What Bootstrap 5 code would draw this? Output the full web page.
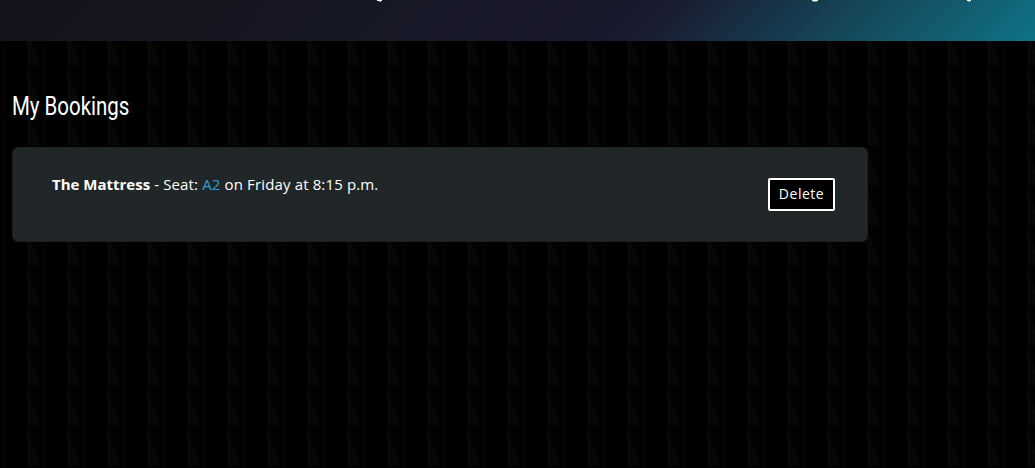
<!DOCTYPE html>
<html lang="en">
<head>
<meta charset="utf-8">
<meta name="viewport" content="width=device-width, initial-scale=1">
<title>My Bookings</title>
<link href="https://cdn.jsdelivr.net/npm/bootstrap@5.3.0/dist/css/bootstrap.min.css" rel="stylesheet">
<style>
html, body { height: 468px; overflow: hidden; }
body {
  color: #fff;
  font-family: "Open Sans", "Noto Sans", sans-serif;
  background: #000 url("data:image/svg+xml,%3Csvg xmlns='http://www.w3.org/2000/svg' width='40' height='40'%3E%3Cpath fill='%23020202' d='M0 0h20v40H0z'/%3E%3Cpath fill='%23080808' d='M0 3L13 40H0z'/%3E%3C/svg%3E") 27px 25px;
}
.site-header { height: 41px; background: linear-gradient(135deg, #13141a 0%, #1a1a2e 62%, #107386 100%); }
.site-header svg { display: block; }
.page-title { font: 400 26px/34px Roboto, sans-serif; margin: 48px 0 24px; transform: scaleX(.787); transform-origin: left; }
.booking { width: 856px; height: 95px; background: #212628; border: 1px solid #1c2023; border-radius: 6px; padding: 24px 32px 0 39px; }
.booking-text { font-size: 15px; line-height: 24px; white-space: nowrap; letter-spacing: .14px; }
.booking-text strong { letter-spacing: 0; }
.seat { color: #2e9fd8; }
.btn-delete { width: 67px; height: 33px; margin-top: 6px; padding: 0 0 1px; background: #000; color: #fff; border: 2px solid #fff; border-radius: 2px; font: 400 14px/26px "Open Sans", sans-serif; letter-spacing: .5px; }
</style>
</head>
<body>
<header class="site-header">
  <svg width="1035" height="3" aria-hidden="true"><path fill="#fff" d="M377 0h5v1h-5zM812 0h6v1h-6zM967 0h4v1h-4z"/><path fill="#7d9aa4" d="M379 1h2v1h-2zM813 1h4v1h-4zM968 1h2v1h-2z"/></svg>
</header>
<main class="container-fluid px-0 ps-2 ms-1">
  <h1 class="page-title">My Bookings</h1>
  <div class="booking d-flex justify-content-between align-items-start">
    <div class="booking-text"><strong>The Mattress</strong> - Seat: <span class="seat">A2</span> on Friday at 8:15 p.m.</div>
    <button type="button" class="btn btn-delete">Delete</button>
  </div>
</main>
<script src="https://cdn.jsdelivr.net/npm/bootstrap@5.3.0/dist/js/bootstrap.bundle.min.js"></script>
</body>
</html>
